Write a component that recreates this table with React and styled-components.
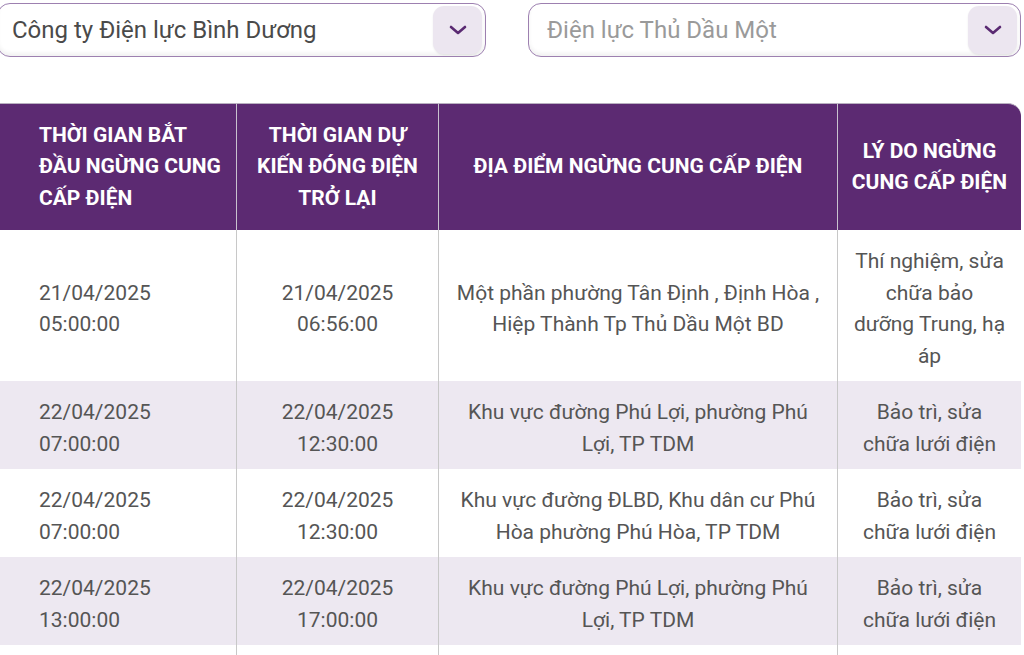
import React from "react";
import styled, { createGlobalStyle } from "styled-components";

const GlobalStyle = createGlobalStyle`
  html, body {
    margin: 0;
    padding: 0;
    background: #ffffff;
    overflow: hidden;
  }
  body {
    font-family: Roboto, "Noto Sans", sans-serif;
  }
`;

const rows = [
  {
    start: ["21/04/2025", "05:00:00"],
    end: ["21/04/2025", "06:56:00"],
    place: "Một phần phường Tân Định , Định Hòa , Hiệp Thành Tp Thủ Dầu Một BD",
    reason: ["Thí nghiệm, sửa", "chữa bảo", "dưỡng Trung, hạ", "áp"],
  },
  {
    start: ["22/04/2025", "07:00:00"],
    end: ["22/04/2025", "12:30:00"],
    place: "Khu vực đường Phú Lợi, phường Phú Lợi, TP TDM",
    reason: ["Bảo trì, sửa", "chữa lưới điện"],
  },
  {
    start: ["22/04/2025", "07:00:00"],
    end: ["22/04/2025", "12:30:00"],
    place: "Khu vực đường ĐLBD, Khu dân cư Phú Hòa phường Phú Hòa, TP TDM",
    reason: ["Bảo trì, sửa", "chữa lưới điện"],
  },
  {
    start: ["22/04/2025", "13:00:00"],
    end: ["22/04/2025", "17:00:00"],
    place: "Khu vực đường Phú Lợi, phường Phú Lợi, TP TDM",
    reason: ["Bảo trì, sửa", "chữa lưới điện"],
  },
  {
    start: ["", ""],
    end: ["", ""],
    place: "",
    reason: [""],
  },
];

function Chevron() {
  return (
    <svg width="18" height="10" viewBox="0 0 18 10" fill="none">
      <path
        d="M2 2 L9 8 L16 2"
        stroke="#5a2a72"
        strokeWidth="2.6"
        strokeLinecap="round"
        strokeLinejoin="round"
      />
    </svg>
  );
}

function Lines({ items }) {
  return items.map((t, i) => (
    <React.Fragment key={i}>
      {i > 0 && <br />}
      {t}
    </React.Fragment>
  ));
}

function App() {
  return (
    <>
      <GlobalStyle />
      <Page>
        <Filters>
          <Select $wide>
            <SelectText>Công ty Điện lực Bình Dương</SelectText>
            <ArrowBox>
              <Chevron />
            </ArrowBox>
          </Select>
          <Select>
            <SelectText $placeholder>Điện lực Thủ Dầu Một</SelectText>
            <ArrowBox>
              <Chevron />
            </ArrowBox>
          </Select>
        </Filters>

        <Table>
          <colgroup>
            <col style={{ width: 240 }} />
            <col style={{ width: 202 }} />
            <col style={{ width: 399 }} />
            <col style={{ width: 183 }} />
          </colgroup>
          <thead>
            <tr>
              <Th $left>
                <Lines items={["THỜI GIAN BẮT", "ĐẦU NGỪNG CUNG", "CẤP ĐIỆN"]} />
              </Th>
              <Th>
                <Lines items={["THỜI GIAN DỰ", "KIẾN ĐÓNG ĐIỆN", "TRỞ LẠI"]} />
              </Th>
              <Th>ĐỊA ĐIỂM NGỪNG CUNG CẤP ĐIỆN</Th>
              <Th $last>
                <Lines items={["LÝ DO NGỪNG", "CUNG CẤP ĐIỆN"]} />
              </Th>
            </tr>
          </thead>
          <tbody>
            {rows.map((r, i) => (
              <Tr key={i} $striped={i % 2 === 1}>
                <Td $left>
                  <Lines items={r.start} />
                </Td>
                <Td>
                  <Lines items={r.end} />
                </Td>
                <Td>{r.place}</Td>
                <Td $reason>
                  <Lines items={r.reason} />
                </Td>
              </Tr>
            ))}
          </tbody>
        </Table>
      </Page>
    </>
  );
}

const Page = styled.div`
  width: 1024px;
  margin-left: -3px;
  padding-top: 3px;
`;

const Filters = styled.div`
  display: grid;
  grid-template-columns: 489px 493px;
  gap: 42px;
  margin-bottom: 46px;
`;

const Select = styled.div`
  height: 54px;
  box-sizing: border-box;
  border: 1.5px solid #9d80b0;
  border-radius: 13px;
  background: #ffffff;
  box-shadow: inset 0 -3px 4px rgba(0, 0, 0, 0.06);
  display: flex;
  align-items: center;
  justify-content: space-between;
  padding: 0 3px 0 ${(p) => (p.$wide ? "14px" : "18px")};
`;

const SelectText = styled.span`
  font-family: Roboto, "Noto Sans", sans-serif;
  font-size: 24px;
  color: ${(p) => (p.$placeholder ? "#9a9a9a" : "#4a4a4a")};
  white-space: nowrap;
`;

const ArrowBox = styled.div`
  width: 49px;
  height: 48px;
  border-radius: 11px;
  background: #ece6f0;
  box-shadow: 0 1px 2px rgba(0, 0, 0, 0.08);
  display: flex;
  align-items: center;
  justify-content: center;
`;

const Table = styled.table`
  width: 1024px;
  table-layout: fixed;
  border-collapse: separate;
  border-spacing: 0;
  font-family: Roboto, "Noto Sans", sans-serif;
`;

const Th = styled.th`
  background: #5c2a72;
  color: #ffffff;
  font-size: 21px;
  font-weight: 700;
  line-height: 31.5px;
  height: 127px;
  box-sizing: border-box;
  padding: 15px 6px;
  text-align: ${(p) => (p.$left ? "left" : "center")};
  padding-left: ${(p) => (p.$left ? "42px" : "6px")};
  border-top: 1px solid #b9b0c0;
  border-right: ${(p) => (p.$last ? "none" : "1.5px solid #c9c2cf")};
  border-top-right-radius: ${(p) => (p.$last ? "13px" : "0")};
  vertical-align: middle;
  white-space: nowrap;
`;

const Tr = styled.tr`
  background: ${(p) => (p.$striped ? "#ede8f1" : "#ffffff")};
`;

const Td = styled.td`
  font-size: 21px;
  line-height: 31.5px;
  color: #555555;
  padding: 16px 14px 9px;
  padding-left: ${(p) => (p.$left ? "42px" : p.$reason ? "4px" : "14px")};
  padding-right: ${(p) => (p.$reason ? "4px" : "14px")};
  text-align: ${(p) => (p.$left ? "left" : "center")};
  border-right: ${(p) => (p.$reason ? "none" : "1.5px solid #c8c8c8")};
  vertical-align: middle;
  height: 63px;
`;

export default App;
